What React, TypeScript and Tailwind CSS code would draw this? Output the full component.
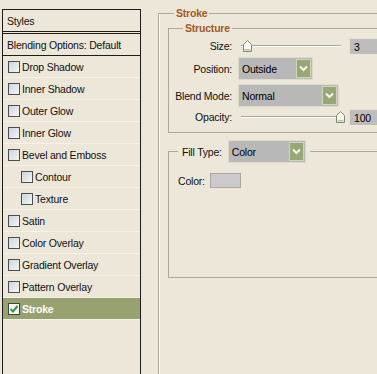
import React from "react";

const rows = [
    { label: "Drop Shadow" },
    { label: "Inner Shadow" },
    { label: "Outer Glow" },
    { label: "Inner Glow" },
    { label: "Bevel and Emboss" },
    { label: "Contour", indent: true },
    { label: "Texture", indent: true },
    { label: "Satin" },
    { label: "Color Overlay" },
    { label: "Gradient Overlay" },
    { label: "Pattern Overlay" },
    { label: "Stroke", active: true },
];

function Check({ checked }: { checked?: boolean }) {
    return (
        <span
            className={
                checked
                    ? "w-[12px] h-[12px] border border-[#3c4a3a] bg-[#f4f6f2] flex items-center justify-center shrink-0"
                    : "w-[12px] h-[12px] border border-[#4a4d52] bg-gradient-to-br from-[#cdd5de] to-[#f4f6f9] shrink-0"
            }
        >
            {checked && (
                <svg width="10" height="10" viewBox="0 0 10 10">
                    <path d="M1.5 5 L4 7.5 L8.5 2" fill="none" stroke="#2f9a4a" strokeWidth="2" />
                </svg>
            )}
        </span>
    );
}

function Thumb({ className }: { className: string }) {
    return (
        <svg className={`absolute top-[2px] ${className}`} width="9" height="12" viewBox="0 0 9 12">
            <path d="M0.5 4.5 L4.5 0.5 L8.5 4.5 V11.5 H0.5 Z" fill="#f6f7f2" stroke="#7d8a6c" />
            <path d="M1.5 9 H7.5 V10.5 H1.5 Z" fill="#b9c7a2" />
        </svg>
    );
}

function Slider({ thumb }: { thumb: string }) {
    return (
        <div className="relative w-[100px] h-[16px]">
            <div className="absolute left-0 right-0 top-[7px] h-[1px] bg-[#aaa696]" />
            <div className="absolute left-0 right-0 top-[8px] h-[1px] bg-white" />
            <Thumb className={thumb} />
        </div>
    );
}

function Select({ value, width }: { value: string; width: string }) {
    return (
        <div className={`${width} h-[23px] border border-[#dedbcd] bg-[#b8b8b8] flex p-[1px]`}>
            <span className="flex-1 pl-[2px] flex items-center text-black">{value}</span>
            <span className="w-[15px] border border-[#cfd6bc] bg-[#97a874] flex items-center justify-center">
                <svg width="9" height="7" viewBox="0 0 9 7">
                    <path d="M1 1.5 L4.5 5 L8 1.5" fill="none" stroke="#f4f6ee" strokeWidth="2" />
                </svg>
            </span>
        </div>
    );
}

function ValueBox({ value }: { value: string }) {
    return (
        <div className="w-[40px] h-[16px] border-l border-t border-[#e4e1d5] bg-[#bdbdbd] pl-[4px] flex items-center text-black">
            {value}
        </div>
    );
}

export default function App() {
    return (
        <div className="w-[377px] h-[374px] overflow-hidden bg-[#ece7d8] flex font-['Liberation_Sans',Arial,sans-serif] text-[10.5px] tracking-[-0.2px] leading-[14px] text-[#111]">
            {/* styles list */}
            <div className="ml-[2px] mt-[9px] w-[139px] h-[400px] shrink-0 border border-[#1c1c1c]">
                <div className="h-[24px] pl-[4px] pt-[1px] flex items-center border-b-[3px] border-double border-[#1c1c1c]">
                    Styles
                </div>
                <div className="h-[22px] pl-[4px] flex items-center border-b border-[#1c1c1c]">
                    Blending Options: Default
                </div>
                {rows.map((r) => (
                    <div
                        key={r.label}
                        className={
                            r.active
                                ? "h-[22px] flex items-center gap-[2px] pl-[5px] bg-[#98a271] text-white font-bold border-b border-[#f5f2e8]"
                                : r.indent
                                ? "h-[22px] flex items-center gap-[2px] pl-[18px] border-b border-[#f5f2e8]"
                                : "h-[22px] flex items-center gap-[2px] pl-[5px] border-b border-[#f5f2e8]"
                        }
                    >
                        <Check checked={r.active} />
                        <span>{r.label}</span>
                    </div>
                ))}
            </div>

            {/* stroke options */}
            <fieldset className="ml-[17px] mt-[6px] w-[240px] h-[400px] shrink-0 border-l border-t border-[#aca897] shadow-[inset_1px_0_0_#fbfaf5]">
                <legend className="ml-[15px] px-[2px] font-bold text-[#a4581f]">Stroke</legend>

                <fieldset className="ml-[9px] mt-[1px] h-[112px] border border-r-0 border-[#aca897]">
                    <legend className="ml-[14px] px-[2px] font-bold text-[#a4581f]">Structure</legend>

                    <div className="mt-[3px] h-[16px] flex items-center">
                        <span className="w-[63px] text-right">Size:</span>
                        <span className="ml-[9px]">
                            <Slider thumb="left-[2px]" />
                        </span>
                        <span className="ml-[8px]">
                            <ValueBox value="3" />
                        </span>
                    </div>

                    <div className="mt-[3px] flex items-center">
                        <span className="w-[63px] text-right">Position:</span>
                        <span className="ml-[6px]">
                            <Select value="Outside" width="w-[75px]" />
                        </span>
                    </div>

                    <div className="mt-[4px] flex items-center">
                        <span className="w-[63px] text-right">Blend Mode:</span>
                        <span className="ml-[6px]">
                            <Select value="Normal" width="w-[101px]" />
                        </span>
                    </div>

                    <div className="mt-[2px] h-[16px] flex items-center">
                        <span className="w-[63px] text-right">Opacity:</span>
                        <span className="ml-[9px]">
                            <Slider thumb="left-[95px]" />
                        </span>
                        <span className="ml-[8px]">
                            <ValueBox value="100" />
                        </span>
                    </div>
                </fieldset>

                <fieldset className="ml-[9px] mt-[7px] h-[138px] border border-r-0 border-[#aca897]">
                    <legend className="ml-[9px] px-[4px] flex items-center gap-[6px]">
                        <span>Fill Type:</span>
                        <Select value="Color" width="w-[78px]" />
                    </legend>

                    <div className="mt-[10px] pl-[9px] flex items-center gap-[5px]">
                        <span>Color:</span>
                        <span className="w-[31px] h-[15px] border border-[#a9a79c] bg-[#cbcbcf]" />
                    </div>
                </fieldset>
            </fieldset>
        </div>
    );
}
